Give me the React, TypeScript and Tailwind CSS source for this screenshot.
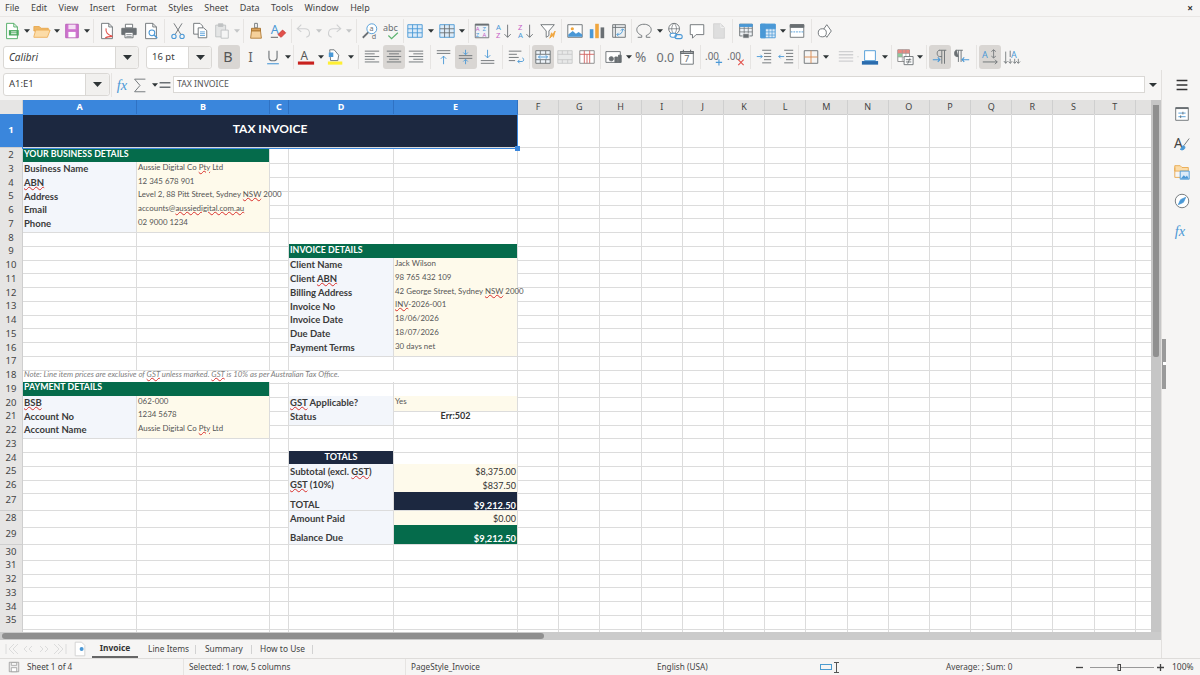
import type { ReactNode } from "react";

type CellDef = { text?: string; kind: string; span?: number };

const G = "#6a6f73";
const B = "#4a98d6";

const Ic = ({ children }: { children: ReactNode }) => (
  <svg width="18" height="18" viewBox="0 0 20 20" fill="none" stroke={G} strokeWidth="1">
    {children}
  </svg>
);

const Letter = ({ x, y, c, s = 8, t }: { x: number; y: number; c: string; s?: number; t: string }) => (
  <text x={x} y={y} fill={c} stroke="none" fontSize={s} fontFamily="Noto Sans, sans-serif">
    {t}
  </text>
);

const icons: Record<string, ReactNode> = {
  newCalc: (
    <>
      <path d="M4 1.5h8l4 4v13H4z" fill="#fff" stroke="#4aa95e" />
      <path d="M12 1.5v4h4" stroke="#4aa95e" />
      <path d="M6.5 9h11v6h-11z" fill="#4aa95e" stroke="none" />
      <path d="M9 11h6M9 13h6" stroke="#fff" />
    </>
  ),
  open: (
    <>
      <path d="M1 5h6l2 2h8v3H1z" fill="#efb766" stroke="#e9a94f" />
      <path d="M1 16l2-7h16l-3 8H1z" fill="#fcdca8" stroke="#eeb05a" />
    </>
  ),
  save: (
    <>
      <path d="M3 2.5h14v15H3z" fill="#cf74cf" stroke="#b65cb6" />
      <path d="M6 3h8v5H6z" fill="#f4e0f4" stroke="none" />
      <path d="M6 11h8v6H6z" fill="#fff" stroke="none" />
    </>
  ),
  pdf: (
    <>
      <path d="M4 1.5h8l4 4v13H4z" fill="#fff" />
      <path d="M12 1.5v4h4" />
      <path d="M9 7c-1 5 2 7 7 9-3 0-6 0-8 2" stroke="#e2504a" strokeWidth="1.2" />
    </>
  ),
  print: (
    <>
      <path d="M6 2.5h8v4H6z" fill="#fff" />
      <path d="M2 7h16v7H2z" fill={G} />
      <path d="M5.5 11.5h9v6h-9z" fill="#fff" />
      <path d="M7 14h6M7 16h6" strokeWidth="0.8" />
    </>
  ),
  preview: (
    <>
      <path d="M4 1.5h8l4 4v13H4z" fill="#fff" />
      <path d="M12 1.5v4h4" />
      <circle cx="11" cy="12" r="3.2" stroke={B} strokeWidth="1.2" />
      <path d="M13.5 14.5l3.5 3.5" stroke={B} strokeWidth="1.4" />
    </>
  ),
  cut: (
    <>
      <path d="M5.5 1.5l7.5 12M14.5 1.5L7 13.5" />
      <circle cx="5.5" cy="16" r="2.4" stroke={B} strokeWidth="1.2" />
      <circle cx="14.5" cy="16" r="2.4" stroke={B} strokeWidth="1.2" />
    </>
  ),
  copy: (
    <>
      <path d="M3 1.5h7l3 3v9H3z" fill="#fff" />
      <path d="M8 6.5h6l3.5 3v8H8z" fill="#fff" />
      <path d="M10 11h5.5M10 13h5.5M10 15h5.5" stroke={B} strokeWidth="0.9" />
    </>
  ),
  paste: (
    <g stroke="#c0c2c3">
      <path d="M3 3.5h11v13H3z" fill="#e4e5e5" />
      <path d="M6 2h5v3H6z" fill="#c0c2c3" />
      <path d="M9 9h8v9H9z" fill="#f5f5f5" />
    </g>
  ),
  clone: (
    <>
      <path d="M8.5 1.5h3v5h-3z" fill="#fff" />
      <path d="M5 7h10v3H5z" fill="#d9a15a" stroke="#a56f2b" />
      <path d="M5 10h10l1 8H4z" fill="#f5d09a" stroke="#b07a36" />
    </>
  ),
  clear: (
    <>
      <Letter x={2} y={13.5} c={B} s={14} t="A" />
      <path d="M2 17h8" stroke="#555" />
      <path d="M10 14l5-5 3.5 3-5 5z" fill="#e2504a" stroke="#c93c37" />
    </>
  ),
  undo: <path d="M7 3L2.500 7.5 7 11M3 7.5h8c6 0 7 8 1.500 9.500" stroke="#cfd0d1" strokeWidth="1.2" />,
  redo: <path d="M13 3l4.500 4.500L13 11M17 7.5H9c-6 0-7 8-1.500 9.500" stroke="#cfd0d1" strokeWidth="1.2" />,
  find: (
    <>
      <circle cx="12" cy="7.5" r="5.5" fill="#fff" stroke={B} />
      <path d="M8 11.5L2 17.5" strokeWidth="2" />
      <Letter x={9.5} y={10} c={G} s={8} t="a" />
      <Letter x={12} y={19} c={G} s={8} t="d" />
    </>
  ),
  spell: (
    <>
      <Letter x={0} y={10} c={G} s={10} t="abc" />
      <path d="M6 15l3.5 3.5 7-6.500" stroke="#5cb36f" strokeWidth="1.3" />
    </>
  ),
  rows: (
    <>
      <path d="M2 3h16v14H2z" fill="#dcebf8" stroke={B} />
      <path d="M2 7.5h16M2 12h16M7.300 3v14M12.600 3v14" stroke={B} />
    </>
  ),
  cols: (
    <>
      <path d="M2 3h16v14H2z" fill="#dcebf8" stroke={B} />
      <path d="M2 7.5h16M2 12h16M7.300 3v14M12.600 3v14" stroke={G} />
    </>
  ),
  sort: (
    <>
      <path d="M2.5 2.500h15v15h-15z" fill="#eef2f6" />
      <path d="M2.5 3h15" strokeWidth="2" />
      <Letter x={3} y={10} c="#c65ec6" s={6.5} t="A" />
      <Letter x={10.5} y={10} c={B} s={6.5} t="Z" />
      <Letter x={3} y={17} c={B} s={6.5} t="Z" />
      <Letter x={10.5} y={17} c="#c65ec6" s={6.5} t="A" />
    </>
  ),
  asc: (
    <>
      <Letter x={1} y={8.5} c={B} s={8.5} t="A" />
      <Letter x={1} y={18} c="#c65ec6" s={8.5} t="Z" />
      <path d="M14 3v14M10.500 13.500L14 17l3.500-3.500" />
    </>
  ),
  desc: (
    <>
      <Letter x={1} y={8.5} c="#c65ec6" s={8.5} t="Z" />
      <Letter x={1} y={18} c={B} s={8.5} t="A" />
      <path d="M14 3v14M10.500 13.500L14 17l3.500-3.500" />
    </>
  ),
  filter: (
    <>
      <path d="M2 3h15l-6 7v5l-3 2v-7z" fill="#fff" />
      <path d="M12 18l2-6 1 2 3-4-2 7-1-2z" fill="#f0a63e" stroke="#f0a63e" />
    </>
  ),
  image: (
    <>
      <path d="M2 3h16v14H2z" fill="#fff" />
      <circle cx="7" cy="7.5" r="1.8" fill="#f0a63e" stroke="none" />
      <path d="M2.500 16.500V14l5-4 3.500 3 3-2 4 3v2.500z" fill={B} stroke="none" />
    </>
  ),
  chart: (
    <>
      <path d="M2 8h4v10H2z" fill={B} stroke="none" />
      <path d="M8 2h4v16H8z" fill="#f0a63e" stroke="none" />
      <path d="M14 6h4v12h-4z" fill={G} stroke="none" />
    </>
  ),
  pivot: (
    <>
      <path d="M3 3h14v14H3z" fill="#eef0f1" />
      <path d="M3 6h14M6 3v14" />
      <path d="M8 14c4 0 6-2 6-6M12 9.500l2-2 2 2M9.500 12L7.500 14l2 2" stroke={B} />
    </>
  ),
  omega: <path d="M3 17h4.500v-2C3 13 2 10.500 2 8.500 2 5 5.500 2.500 10 2.500S18 5 18 8.500c0 2-1 4.500-5.500 6.500v2H17" />,
  link: (
    <>
      <circle cx="9" cy="7.5" r="6" fill="#fff" />
      <path d="M3 7.5h12M9 1.500c-3.500 3-3.500 9 0 12M9 1.500c3.500 3 3.500 9 0 12" strokeWidth="0.8" />
      <rect x="4.5" y="12.5" width="7" height="4.5" rx="2.2" fill="#fff" stroke={B} strokeWidth="1.2" />
      <rect x="10" y="14" width="8" height="4.5" rx="2.2" stroke={B} strokeWidth="1.2" />
    </>
  ),
  note: <path d="M2.500 3h15v11H9l-4 4v-4H2.500z" fill="#fff" />,
  headers: (
    <>
      <path d="M4 2h8l4 4v12H4z" fill="#dedede" stroke="#d2d2d2" />
      <path d="M12 2v4h4" stroke="#f2f2f2" />
    </>
  ),
  area: (
    <>
      <path d="M3 2.500h14v13H3z" fill="#eef2f6" />
      <path d="M3 7h14M3 11h14M8 2.500v13M12.500 2.500v13" strokeWidth="0.8" />
      <path d="M3 2.500h14v2.500H3z" fill={B} stroke={B} />
      <path d="M6.500 13h7v5h-7z" fill={G} stroke="#fff" strokeWidth="0.7" />
    </>
  ),
  freeze: (
    <>
      <path d="M2 2.500h16v15H2z" fill="#dcebf8" stroke={B} />
      <path d="M2 2.500h16v5H2zM2 2.500h5v15H2z" fill={B} stroke={B} />
      <path d="M2 11h16M2 14.500h16M11 2.500v15M14.500 2.500v15" stroke={B} strokeWidth="0.8" />
    </>
  ),
  split: (
    <>
      <path d="M2.500 3h15v14h-15z" fill="#fff" />
      <path d="M2.500 3h15v3h-15z" fill={G} />
      <path d="M3 11h14" stroke={B} strokeDasharray="2 1" />
    </>
  ),
  shapes: (
    <>
      <path d="M8 10l5-7 5 7-5 7z" fill="#fff" transform="translate(-1 0)" />
      <circle cx="7" cy="12" r="4.5" fill="#fff" />
    </>
  ),
  bold: <Letter x={3.5} y={16} c="#555" s={16} t="B" />,
  italic: <Letter x={7} y={15.5} c="#666" s={15} t="I" />,
  under: (
    <>
      <path d="M5.500 3v7.500c0 5 9 5 9 0V3" strokeWidth="1.2" />
      <path d="M3.500 17.500h13" stroke={B} strokeWidth="1.2" />
    </>
  ),
  color: (
    <>
      <Letter x={4} y={13} c="#555" s={13} t="A" />
      <path d="M1 15h18v3.500H1z" fill="#c9211e" stroke="none" />
    </>
  ),
  hilite: (
    <>
      <path d="M3 2h5l5 6-1 6H4z" fill="#fff" stroke={G} />
      <path d="M2 5h5v5H2z" fill={B} stroke="none" />
      <path d="M1 15h16v3.500H1z" fill="#ffef33" stroke="none" />
    </>
  ),
  left: <path d="M2 3.500h16M2 6.500h11M2 9.500h16M2 12.500h11M2 15.500h16" />,
  center: <path d="M2 3.500h16M4.500 6.500h11M2 9.500h16M4.500 12.500h11M2 15.500h16" />,
  right: <path d="M2 3.500h16M7 6.500h11M2 9.500h16M7 12.500h11M2 15.500h16" />,
  top: (
    <>
      <path d="M2 3h15M2 6h15" />
      <path d="M9.500 18V9M6.500 12l3-3 3 3" stroke={B} />
    </>
  ),
  middle: (
    <>
      <path d="M2 8.500h15M2 11.500h15" />
      <path d="M9.500 2v5M7 5l2.500 2.500L12 5M9.500 18v-5M7 15l2.500-2.500L12 15" stroke={B} />
    </>
  ),
  bottom: (
    <>
      <path d="M2 14h15M2 17h15" />
      <path d="M9.500 2v9M6.500 8l3 3 3-3" stroke={B} />
    </>
  ),
  wrap: (
    <>
      <path d="M2 3.500h14M2 7h9M2 10.500h11M2 14h7" />
      <path d="M11 14h5c2 0 2-4 0-4M13 12l-2 2 2 2" stroke={B} transform="translate(1 1)" />
    </>
  ),
  merge: (
    <>
      <path d="M2 3h16v14H2z" fill="#eef4fa" />
      <path d="M2 7h16M2 13h16M7 3v4M13 3v4M7 13v4M13 13v4" />
      <path d="M5 10h10M7 8l-2 2 2 2M13 8l2 2-2 2" stroke={B} />
    </>
  ),
  mergeOff: (
    <g stroke="#c8cacb">
      <path d="M2 3h16v14H2z" fill="#e8e9e9" />
      <path d="M2 7h16M2 13h16M7 3v4M13 3v4M7 13v4M13 13v4" />
    </g>
  ),
  splitCell: (
    <g stroke="#d0615d">
      <path d="M2 3h16v14H2z" fill="#fff" stroke="#888" />
      <path d="M2 7h16M7 3v14M10 7v10M13 3v14" />
    </g>
  ),
  currency: (
    <>
      <path d="M1 4h16v12H1z" fill="#fff" />
      <circle cx="7" cy="12" r="2.400" fill={G} />
      <path d="M11 10h3v6h-3zM15 8h3v8h-3z" fill={G} />
    </>
  ),
  percent: <Letter x={1} y={16} c={G} s={15} t="%" />,
  number: <Letter x={0.5} y={15.5} c={G} s={14} t="0.0" />,
  date: (
    <>
      <path d="M3 4h14v14H3z" fill="#fff" />
      <path d="M3 4h14v2H3zM6 2v3M14 2v3" strokeWidth="1.2" />
      <Letter x={7} y={16} c={G} s={10} t="7" />
    </>
  ),
  addDec: (
    <>
      <Letter x={0} y={13} c={G} s={11} t=".00" />
      <path d="M15.500 12.500v7M12 16h7" stroke={B} strokeWidth="1.2" />
    </>
  ),
  delDec: (
    <>
      <Letter x={0} y={13} c={G} s={11} t=".00" />
      <path d="M12.500 13l6 6M18.500 13l-6 6" stroke="#e2504a" strokeWidth="1.2" />
    </>
  ),
  indent: (
    <>
      <path d="M8 2.500h10M10 6h8M10 9.500h8M10 13h8M8 16.500h10" />
      <path d="M2 9.500h6M6 7.500l2 2-2 2" stroke={B} />
    </>
  ),
  outdent: (
    <>
      <path d="M8 2.500h10M10 6h8M10 9.500h8M10 13h8M8 16.500h10" />
      <path d="M2 9.500h6M4 7.500l-2 2 2 2" stroke={B} />
    </>
  ),
  borders: (
    <>
      <path d="M2.500 3h15v14h-15z" />
      <path d="M2.500 10h15M10 3v14" stroke="#d98a4e" />
    </>
  ),
  bstyle: <path d="M2 4h16M2 7.500h16M2 11h16M2 14.500h16" stroke="#cfd0d1" strokeWidth="1.4" />,
  bcolor: (
    <>
      <path d="M4 3h12v11H4z" fill="#fff" stroke={B} />
      <path d="M1 14.500h18v4H1z" fill="#2a6cae" stroke="none" />
    </>
  ),
  cond: (
    <>
      <path d="M2 2h13v13H2z" fill="#fff" stroke="#888" />
      <path d="M2 2h13v4H2z" fill="#e88a82" stroke="none" />
      <path d="M2 6h5v4H2z" fill="#8fcb9c" stroke="none" />
      <path d="M2 6h13M2 10h13M7 2v13M11 2v13" stroke="#999" strokeWidth="0.7" />
      <path d="M9 9.500h10v9H9z" fill="#fff" />
      <path d="M11 13h6M11 15.500h6M15.500 11.500l-2.500 6" />
    </>
  ),
  ltr: (
    <>
      <path d="M9 2.500h8M12 2.500v15M15 2.500v15M12 9.500H9.500C6 9.500 6 2.500 9.500 2.500" />
      <path d="M2 13h8M7.500 10.500L10 13l-2.500 2.500" stroke={B} strokeWidth="1.2" />
    </>
  ),
  rtl: (
    <>
      <path d="M3 2.500h8M6 2.500v13M9 2.500v13" />
      <path d="M6 9.500H4C1 9.500 1 2.500 4 2.500" fill={G} />
      <path d="M10 13h8M12.500 10.500L10 13l2.500 2.500" stroke={B} strokeWidth="1.2" />
    </>
  ),
  dirH: (
    <>
      <Letter x={1} y={11.5} c={B} s={10} t="A" />
      <path d="M14 2v9M11.500 4L14 2l2.500 2M11.500 9l2.500 2 2.500-2" strokeWidth="0.9" />
      <path d="M2 15.500h16M15.500 13l2.500 2.500-2.500 2.500" />
    </>
  ),
  dirV: (
    <>
      <Letter x={9} y={11.5} c={B} s={10} t="A" />
      <path d="M3 4v13M1 14.500L3 17l2-2.500M8 12v5M6 15l2 2 2-2M13 12v5M11 15l2 2 2-2M17 12v5M15 15l2 2 2-2" strokeWidth="0.9" />
      <path d="M8 3v7" />
    </>
  ),
  fx: (
    <text x="2" y="15.5" fontSize="16" fontStyle="italic" fontFamily="Liberation Serif, serif" fill={B} stroke="none">
      fx
    </text>
  ),
  sigma: <path d="M16 3.500H4l6 7-6 7h12" />,
  equals: <path d="M4 7.500h12M4 12.500h12" strokeWidth="1.6" />,
  menu: <path d="M4 5h12M4 10h12M4 15h12" stroke="#333" strokeWidth="1.5" />,
  props: (
    <>
      <path d="M3 3h14v14H3z" fill="#fff" />
      <path d="M3 3.500h14" strokeWidth="2" />
      <path d="M6 9h8M6 13h8" stroke={B} />
      <path d="M11 7.500v3M8.500 11.500v3" stroke={G} />
    </>
  ),
  styles: (
    <>
      <Letter x={1} y={15} c="#444" s={15} t="A" />
      <path d="M18 5l-6 8" />
      <path d="M10 14c2-2 4 0 3 2-1 2-4 2-5 1 1-.5 1.500-1.500 2-3z" fill={B} stroke={B} />
    </>
  ),
  gallery: (
    <>
      <path d="M2 3h6l2 2h7v4H2z" fill="#fcdca8" stroke="#e9a94f" />
      <path d="M2 5v11h6" stroke="#e9a94f" />
      <path d="M8 9h10v9H8z" fill="#dcebf8" stroke={B} />
      <path d="M8.500 17.500l3.500-4 2 2 1.500-1.500 2 3.500z" fill={B} stroke="none" />
    </>
  ),
  nav: (
    <>
      <circle cx="10" cy="10" r="7.5" fill="#fff" />
      <path d="M14 6l-2.500 5.500L6 14l2.500-5.500z" fill={B} stroke={B} />
    </>
  ),
  docPlus: (
    <>
      <path d="M4 1.500h8l4 4v13H4z" fill="#fff" stroke="#ccc" />
      <circle cx="12" cy="10" r="2.500" fill={B} stroke="none" />
    </>
  ),
  disk: (
    <>
      <path d="M3 3h14v14H3z" fill="#eee" stroke="#8a8a8a" />
      <path d="M6 3.500h8v4H6zM6 11h8v6H6z" fill="#fff" stroke="#8a8a8a" />
    </>
  ),
};

const Caret = ({ off }: { off?: boolean }) => (
  <svg width="6" height="4" viewBox="0 0 7 4">
    <path d="M0 0h7L3.500 4z" fill={off ? "#c4c6c7" : "#2e3436"} />
  </svg>
);

const Btn = ({ i, on }: { i: string; on?: boolean }) => (
  <div className={`flex h-[24px] w-[22px] shrink-0 items-center justify-center rounded-[3px] ${on ? "bg-[#d9d6d3]" : ""}`}>
    <Ic>{icons[i]}</Ic>
  </div>
);

const Drop = ({ off, cls = "w-[8px]" }: { off?: boolean; cls?: string }) => (
  <div className={`flex h-[24px] shrink-0 items-center justify-center ${cls}`}>
    <Caret off={off} />
  </div>
);

const Sep = ({ cls = "w-[5px]" }: { cls?: string }) => (
  <div className={`flex h-[24px] shrink-0 justify-center ${cls}`}>
    <div className="h-full w-px bg-[#e6e4e2]" />
  </div>
);

const Combo = ({ text, cls, split, italic, size }: { text: string; cls: string; split: string; italic?: boolean; size: string }) => (
  <div className={`flex h-[23px] shrink-0 rounded-[3px] border border-[#dad8d5] bg-white ${cls}`}>
    <div className={`flex min-w-0 flex-1 items-center pl-[5px] text-[#3d3d3d] ${size} ${italic ? "italic" : ""}`}>{text}</div>
    <div className={`flex items-center justify-center rounded-r-[3px] border-l border-[#dad8d5] bg-[#f1f0ee] ${split}`}>
      <svg width="9" height="5" viewBox="0 0 9 5">
        <path d="M0 0h9L4.500 5z" fill="#2e3436" />
      </svg>
    </div>
  </div>
);

const menuItems = ["File", "Edit", "View", "Insert", "Format", "Styles", "Sheet", "Data", "Tools", "Window", "Help"];

const Toolbar1 = () => (
  <div className="flex h-[26px] items-center pl-[1px]">
    <Btn i="newCalc" /><Drop />
    <Btn i="open" /><Drop />
    <Btn i="save" /><Drop />
    <Sep />
    <Btn i="pdf" /><Btn i="print" /><Btn i="preview" />
    <Sep />
    <Btn i="cut" /><Btn i="copy" /><Btn i="paste" /><Drop off />
    <Sep cls="w-[4px]" />
    <Btn i="clone" /><Btn i="clear" />
    <Sep cls="w-[4px]" />
    <Btn i="undo" /><Drop off />
    <Btn i="redo" /><Drop off />
    <Sep cls="w-[6px]" />
    <Btn i="find" /><Btn i="spell" />
    <Sep cls="w-[1px]" />
    <Btn i="rows" /><Drop cls="w-[10px]" />
    <Btn i="cols" /><Drop />
    <Sep />
    <Btn i="sort" /><Btn i="asc" /><Btn i="desc" /><Btn i="filter" />
    <Sep />
    <Btn i="image" /><Btn i="chart" /><Btn i="pivot" />
    <Sep cls="w-[3px]" />
    <Btn i="omega" /><Drop cls="w-[9px]" />
    <Btn i="link" /><Btn i="note" /><Btn i="headers" />
    <Sep />
    <Btn i="area" /><Btn i="freeze" /><Drop cls="w-[7px]" />
    <Btn i="split" />
    <Sep cls="w-[6px]" />
    <Btn i="shapes" />
  </div>
);

const Toolbar2 = () => (
  <div className="flex h-[26px] items-center pl-[3px]">
    <Combo text="Calibri" cls="w-[136px]" split="w-[23px]" size="text-[10px]" italic />
    <div className="w-[7px] shrink-0" />
    <Combo text="16 pt" cls="w-[66px]" split="w-[23px]" size="text-[9.5px]" />
    <div className="w-[6px] shrink-0" />
    <Btn i="bold" on /><Btn i="italic" /><Btn i="under" /><Drop />
    <Sep cls="w-[3px]" />
    <Btn i="color" /><Drop /><Btn i="hilite" /><Drop />
    <Sep cls="w-[6px]" />
    <Btn i="left" /><Btn i="center" on /><Btn i="right" />
    <Sep cls="w-[6px]" />
    <Btn i="top" /><Btn i="middle" on /><Btn i="bottom" />
    <Sep cls="w-[6px]" />
    <Btn i="wrap" />
    <Sep />
    <Btn i="merge" on /><Btn i="mergeOff" /><Btn i="splitCell" />
    <Sep cls="w-[5px]" />
    <Btn i="currency" /><Drop cls="w-[7px]" />
    <Btn i="percent" /><Btn i="number" /><Btn i="date" />
    <Sep />
    <Btn i="addDec" /><Btn i="delDec" />
    <Sep cls="w-[6px]" />
    <Btn i="indent" /><Btn i="outdent" />
    <Sep cls="w-[3px]" />
    <Btn i="borders" /><Drop />
    <div className="w-[5px] shrink-0" />
    <Btn i="bstyle" /><Drop cls="w-[2px]" off />
    <Btn i="bcolor" /><Drop />
    <Sep />
    <Btn i="cond" /><Drop />
    <Sep />
    <Btn i="ltr" on /><Btn i="rtl" />
    <Sep cls="w-[6px]" />
    <Btn i="dirH" on /><Btn i="dirV" />
  </div>
);

const FormulaBar = () => (
  <div className="flex h-[30px] items-start pl-[3px] pt-[3px]">
    <Combo text="A1:E1" cls="w-[107px]" split="w-[24px]" size="text-[9.5px]" />
    <Sep cls="w-[3px]" />
    <div className="flex h-[23px] items-center">
      <Btn i="fx" />
      <div className="-ml-[6px]"><Btn i="sigma" /></div>
      <Drop cls="w-[7px]" />
      <div className="-ml-[4px]"><Btn i="equals" /></div>
    </div>
    <div className="mt-[3px] ml-[-3px] flex h-[17px] w-[972px] items-center border border-[#dad8d5] bg-white pl-[3px] text-[8.7px] text-[#555]">TAX INVOICE</div>
    <div className="ml-[3px] flex h-[23px] w-[10px] items-center justify-center">
      <svg width="8" height="4" viewBox="0 0 8 4"><path d="M0 0h8L4 4z" fill="#2e3436" /></svg>
    </div>
  </div>
);

const colLetters = ["A", "B", "C", "D", "E", "F", "G", "H", "I", "J", "K", "L", "M", "N", "O", "P", "Q", "R", "S", "T", "U"];
const GRID = "grid grid-cols-[23px_114px_133px_19px_105px_124px_repeat(16,41.2px)]";

const label = (text: string): CellDef => ({ text, kind: "label" });
const value = (text: string): CellDef => ({ text, kind: "value" });
const sect = (text: string, span: number): CellDef => ({ text, kind: "section", span });

// cells per row, keyed by column letter
const sheet: Record<number, Record<string, CellDef>> = {
  1: { A: { text: "TAX INVOICE", kind: "title", span: 5 } },
  2: { A: sect("YOUR BUSINESS DETAILS", 2) },
  3: { A: label("Business Name"), B: value("Aussie Digital Co Pty Ltd") },
  4: { A: label("ABN"), B: value("12 345 678 901") },
  5: { A: label("Address"), B: value("Level 2, 88 Pitt Street, Sydney NSW 2000") },
  6: { A: label("Email"), B: value("accounts@aussiedigital.com.au") },
  7: { A: label("Phone"), B: value("02 9000 1234") },
  9: { D: sect("INVOICE DETAILS", 2) },
  10: { D: label("Client Name"), E: value("Jack Wilson") },
  11: { D: label("Client ABN"), E: value("98 765 432 109") },
  12: { D: label("Billing Address"), E: value("42 George Street, Sydney NSW 2000") },
  13: { D: label("Invoice No"), E: value("INV-2026-001") },
  14: { D: label("Invoice Date"), E: value("18/06/2026") },
  15: { D: label("Due Date"), E: value("18/07/2026") },
  16: { D: label("Payment Terms"), E: value("30 days net") },
  18: { A: { text: "Note: Line item prices are exclusive of GST unless marked. GST is 10% as per Australian Tax Office.", kind: "note", span: 5 } },
  19: { A: sect("PAYMENT DETAILS", 2) },
  20: { A: label("BSB"), B: value("062-000"), D: label("GST Applicable?"), E: value("Yes") },
  21: { A: label("Account No"), B: value("1234 5678"), D: label("Status"), E: { text: "Err:502", kind: "error" } },
  22: { A: label("Account Name"), B: value("Aussie Digital Co Pty Ltd") },
  24: { D: { text: "TOTALS", kind: "totals" } },
  25: { D: { text: "Subtotal (excl. GST)", kind: "labelSm" }, E: { text: "$8,375.00", kind: "money" } },
  26: { D: { text: "GST (10%)", kind: "labelSm" }, E: { text: "$837.50", kind: "money" } },
  27: { D: label("TOTAL"), E: { text: "$9,212.50", kind: "navyMoney" } },
  28: { D: label("Amount Paid"), E: { text: "$0.00", kind: "money" } },
  29: { D: label("Balance Due"), E: { text: "$9,212.50", kind: "greenMoney" } },
};

const kindClass: Record<string, string> = {
  blank: "",
  title: "justify-center bg-[#1c2840] pb-[3px] text-[12px] font-bold text-white",
  section: "bg-[#056b4b] pb-[3px] pl-[1px] text-[8.8px] font-bold text-white",
  label: "bg-[#f3f6fb] pb-[1px] pl-[1px] text-[9.5px] font-bold text-[#3a3a3a]",
  labelSm: "bg-[#f3f6fb] pb-[1px] pl-[1px] text-[9.5px] font-bold text-[#3a3a3a]",
  value: "bg-[#fefaeb] pb-[3px] pl-[1px] text-[7.9px] text-[#555]",
  note: "pb-[1px] pl-[1px] text-[7.8px] italic text-[#808080]",
  error: "justify-center pb-[2px] text-[9px] font-bold text-[#333]",
  totals: "justify-center bg-[#1c2840] pb-[3px] text-[9px] font-bold text-white",
  money: "justify-end bg-[#fefaeb] pr-[1px] text-[9px] text-[#333]",
  navyMoney: "items-end justify-end bg-[#1c2840] pr-[1px] text-[9.3px] font-bold text-white",
  greenMoney: "items-end justify-end bg-[#056b4b] pr-[1px] text-[9.3px] font-bold text-white",
};

// words the spell checker flags in the reference
const flagged = /\b(ABN|Pty|NSW|aussiedigital\.com\.au|GST|INV|BSB)\b/;
const flaggedWords = ["ABN", "Pty", "NSW", "aussiedigital.com.au", "GST", "INV", "BSB"];

const Spell = ({ text }: { text: string }) => (
  <>
    {text.split(new RegExp(flagged, "g")).map((part, i) =>
      flaggedWords.includes(part) ? (
        <span key={i} className="underline decoration-[#d9302c] decoration-wavy decoration-[1px] underline-offset-[0px]">
          {part}
        </span>
      ) : (
        <span key={i}>{part}</span>
      ),
    )}
  </>
);

const spanClass: Record<number, string> = { 1: "", 2: "col-span-2", 5: "col-span-5" };

const Row = ({ n }: { n: number }) => {
  const data = sheet[n] ?? {};
  const tall = n === 27 || n === 29;
  const height = n === 1 ? "h-[34px]" : tall ? "h-[19.5px]" : "h-[13.75px]";
  const cells: ReactNode[] = [];
  for (let c = 0; c < colLetters.length; c++) {
    const def = data[colLetters[c]] ?? { kind: "blank" };
    const span = def.span ?? 1;
    const tallLabel = tall && def.kind === "label" ? "items-end" : "items-center";
    cells.push(
      <div
        key={c}
        className={`relative flex min-w-0 whitespace-nowrap border-r border-b border-[#dcdcdc] leading-none ${tallLabel} ${spanClass[span]} ${kindClass[def.kind]}`}
      >
        {def.text && (
          <span className="relative z-10">
            <Spell text={def.text} />
          </span>
        )}
      </div>,
    );
    c += span - 1;
  }
  return (
    <div className={`${GRID} ${height}`}>
      <div
        className={`flex items-center justify-center border-r border-b border-[#cfcfcf] pb-[1px] font-['Noto_Sans',sans-serif] text-[9.5px] ${
          n === 1 ? "bg-[#3a86dc] font-bold text-white" : "bg-[#e6e5e4] text-[#444]"
        }`}
      >
        {n < 36 ? n : ""}
      </div>
      {cells}
    </div>
  );
};

const Sheet = () => {
  const rowNumbers = Array.from({ length: 36 }, (_, i) => i + 1);
  return (
    <div className="relative h-[532px] min-w-0 flex-1 overflow-hidden bg-white font-['Lato',sans-serif]">
      <div className={`${GRID} h-[14px]`}>
        <div className="border-r border-b border-[#cfcfcf] bg-[#e6e5e4]" />
        {colLetters.map((c, i) => (
          <div
            key={c}
            className={`flex items-center justify-center border-r border-b font-['Noto_Sans',sans-serif] text-[9px] ${
              i < 5 ? "border-[#2f72c4] bg-[#3a86dc] font-bold text-white" : "border-[#cfcfcf] bg-[#e2e1e0] text-[#444]"
            }`}
          >
            {i < 20 ? c : ""}
          </div>
        ))}
      </div>
      {rowNumbers.map((n) => (
        <Row key={n} n={n} />
      ))}
      {/* selection frame over A1:E1 */}
      <div className="absolute top-[14px] left-[22px] z-20 h-[34.5px] w-[496px] border border-[#3a86dc]">
        <div className="absolute right-[-3px] bottom-[-3px] h-[5px] w-[5px] bg-[#3a86dc]" />
      </div>
    </div>
  );
};

const VScroll = () => (
  <div className="relative h-[532px] w-[10px] shrink-0 bg-[#c6c6c6]">
    <div className="absolute top-[5px] left-[2px] h-[252px] w-[6px] rounded-b-[2px] bg-[#8f8f8f]" />
  </div>
);

const Tabs = () => (
  <div className="flex h-[18px] items-center bg-[#f6f5f4] text-[8.4px] whitespace-nowrap text-[#444]">
    <div className="flex w-[72px] shrink-0 justify-center">
      <svg width="62" height="12" viewBox="0 0 62 12" fill="none" stroke="#dcdcdc">
        <path d="M1 1v10M9 1L4 6l5 5M13 1L8 6l5 5M22 3l-3 3 3 3M27 3l-3 3 3 3M35 3l3 3-3 3M40 3l3 3-3 3M49 1l5 5-5 5M53 1l5 5-5 5M61 1v10" />
      </svg>
    </div>
    <div className="flex w-[16px] shrink-0 justify-center">
      <Ic>{icons.docPlus}</Ic>
    </div>
    <div className="ml-[4px] flex h-full w-[46px] shrink-0 items-center justify-center border-b-2 border-[#666] font-bold text-[#333]">Invoice</div>
    <div className="ml-[10px] w-[38px] shrink-0 text-center">Line Items</div>
    <div className="ml-[9px] h-[9px] w-px bg-[#d2d2d2]" />
    <div className="ml-[9px] w-[37px] shrink-0 text-center">Summary</div>
    <div className="ml-[9px] h-[9px] w-px bg-[#d2d2d2]" />
    <div className="ml-[8px] w-[43px] shrink-0 text-center">How to Use</div>
    <div className="ml-[9px] h-[9px] w-px bg-[#d2d2d2]" />
  </div>
);

const StatusBar = () => (
  <div className="flex h-[17px] items-center border-t border-[#dedcda] text-[8.2px] text-[#444]">
    <div className="flex w-[27px] shrink-0 justify-center">
      <div className="scale-[0.75]"><Ic>{icons.disk}</Ic></div>
    </div>
    <div className="w-[156px] shrink-0 whitespace-nowrap">Sheet 1 of 4</div>
    <div className="h-full w-px shrink-0 bg-[#e6e4e2]" />
    <div className="w-[221px] shrink-0 whitespace-nowrap pl-[5px]">Selected: 1 row, 5 columns</div>
    <div className="h-full w-px shrink-0 bg-[#e6e4e2]" />
    <div className="w-[251px] shrink-0 whitespace-nowrap pl-[5px]">PageStyle_Invoice</div>
    <div className="w-[163px] shrink-0 whitespace-nowrap">English (USA)</div>
    <div className="flex w-[126px] shrink-0 items-center">
      <div className="h-[6px] w-[12px] border border-[#4a9bd0]" />
      <div className="ml-[2px] h-[11px] w-[5px]">
        <svg width="5" height="11" viewBox="0 0 5 11" fill="none" stroke="#555"><path d="M0 .5h5M0 10.500h5M2.500 .5v10" /></svg>
      </div>
    </div>
    <div className="w-[130px] shrink-0 whitespace-nowrap">Average: ; Sum: 0</div>
    <div className="flex w-[92px] shrink-0 items-center">
      <svg width="92" height="11" viewBox="0 0 92 11" fill="none" stroke="#444">
        <path d="M0 5.500h7" strokeWidth="1.3" />
        <path d="M14 5.500h64" stroke="#999" />
        <rect x="42" y="2.500" width="2.500" height="6" fill="#f6f5f4" />
        <path d="M81 5.500h7M84.500 2v7" strokeWidth="1.3" />
      </svg>
    </div>
    <div className="ml-[4px] whitespace-nowrap text-[8.5px]">100%</div>
  </div>
);

export default function App() {
  const sideIcons = ["menu", "props", "styles", "gallery", "nav", "fx"];
  return (
    <div className="flex h-[675px] w-[1200px] flex-col overflow-hidden bg-[#f6f5f4] font-['Noto_Sans',sans-serif]">
      {/* menu bar */}
      <div className="flex h-[17px] items-center justify-between border-b border-[#e9e7e5] pr-[7px] pl-[5px]">
        <div className="flex gap-[11.5px] text-[9px] text-[#444]">
          {menuItems.map((m) => (
            <span key={m}>{m}</span>
          ))}
        </div>
        <span className="text-[10px] font-bold leading-none text-[#333]">×</span>
      </div>
      <div className="h-[1px]" />
      <Toolbar1 />
      <Toolbar2 />

      <div className="flex min-h-0 flex-1">
        <div className="flex w-[1161px] shrink-0 flex-col">
          <FormulaBar />
          <div className="flex">
            <Sheet />
            <VScroll />
          </div>
          <div className="relative h-[8px] bg-[#cbcbcb]">
            <div className="absolute top-[1px] left-[2px] h-[6px] w-[542px] rounded-[3px] bg-[#8f8f8f]" />
          </div>
          <Tabs />
        </div>
        <div className="relative flex flex-1 flex-col items-center border-l border-[#e2e0de]">
          <div className="absolute top-[269px] left-0 h-[50px] w-[4px] bg-[#9a9a9a]">
            <div className="absolute top-[23px] left-[1px] h-[3px] w-[3px] bg-white" />
          </div>
          {sideIcons.map((s) => (
            <div key={s} className="flex h-[29.2px] w-[22px] items-center justify-center pl-[1px]">
              <Ic>{icons[s]}</Ic>
            </div>
          ))}
        </div>
      </div>
      <StatusBar />
    </div>
  );
}
